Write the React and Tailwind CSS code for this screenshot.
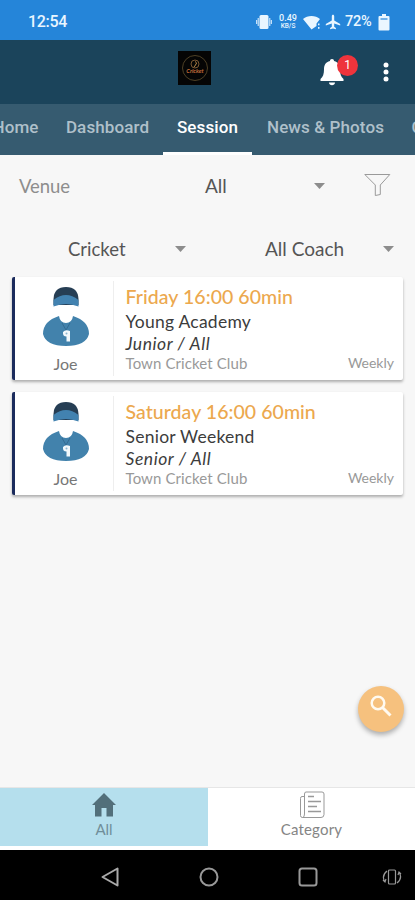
import { clsx } from "clsx";

const tabs = [
  { label: "Home", width: "w-[73px] justify-center" },
  { label: "Dashboard", width: "w-[111px] justify-center" },
  { label: "Session", width: "w-[89px] justify-center", active: true },
  { label: "News & Photos", width: "w-[147px] justify-center" },
  { label: "C", width: "w-[100px] pl-[12.5px]" },
];

const sessions = [
  {
    time: "Friday 16:00 60min",
    name: "Young Academy",
    group: "Junior / All",
    club: "Town Cricket Club",
    repeat: "Weekly",
    coach: "Joe",
  },
  {
    time: "Saturday 16:00 60min",
    name: "Senior Weekend",
    group: "Senior / All",
    club: "Town Cricket Club",
    repeat: "Weekly",
    coach: "Joe",
  },
];

function StatusBar() {
  return (
    <div className="flex h-10 shrink-0 items-center bg-[#2585d9] pt-1 pl-7 pr-[25px] font-[Roboto] font-medium text-[#eaf6ff]">
      <span className="text-[16px] tracking-[-0.3px]">12:54</span>
      <div className="ml-auto flex items-center">
        <svg width="16" height="16" viewBox="0 0 16 16" fill="currentColor">
          <rect x="3.500" y="1" width="9" height="14" rx="1.500" />
          <path d="M2.200 4v8M.7 6v4M13.800 4v8M15.300 6v4" stroke="currentColor" strokeWidth="1" />
        </svg>
        <div className="ml-[6px] flex w-5 flex-col items-center">
          <span className="text-[9px] leading-[9px]">0.49</span>
          <span className="text-[6.500px] leading-[7px]">KB/S</span>
        </div>
        <svg className="ml-[5px]" width="18" height="15" viewBox="0 0 18 15" fill="currentColor">
          <path d="M0 4C4.500 0 12.500 0 17 4L13.500 8.500V11L8.500 14.500Z" />
          <path d="M15 8.500h1.500v1.800H15zM15 12h1.500v1.800H15z" />
        </svg>
        <svg className="ml-[4px]" width="16" height="16" viewBox="0 0 16 16" fill="currentColor">
          <path d="M8 .8c.8 0 1.200.7 1.200 1.500v4.200l6 3.400v1.500l-6-1.800v3.200l1.700 1.200v1.200L8 14.400l-2.900.8V14l1.700-1.200V9.600l-6 1.800V9.900l6-3.400V2.300C6.800 1.500 7.200.8 8 .8Z" />
        </svg>
        <span className="ml-1 w-[29px] text-[14.500px] tracking-[-0.2px]">72%</span>
        <svg className="ml-[4px]" width="12" height="17" viewBox="0 0 12 17" fill="currentColor">
          <path d="M4 0h4v2h2.500q1 0 1 1v12.500q0 1-1 1h-9q-1 0-1-1V3q0-1 1-1H4z" />
          <path d="M2.500 5h7" stroke="#2585d9" strokeWidth="1.200" />
        </svg>
      </div>
    </div>
  );
}

function Header() {
  return (
    <header className="flex h-16 shrink-0 items-start bg-[#1b445b] pr-[25px]">
      <div className="mt-[11px] ml-[178px] flex h-[34px] w-[33px] items-center justify-center bg-[#050505]">
        <svg width="28" height="28" viewBox="0 0 28 28" fill="none">
          <circle cx="14" cy="14" r="12.500" stroke="#4d4025" />
          <circle cx="14" cy="10" r="4" stroke="#7a5733" />
          <path d="M14 7.500q3 1 .5 3.500l-1.500 2" stroke="#b98949" />
          <text x="14" y="19" textAnchor="middle" fontSize="5.800" fontWeight="700" fontStyle="italic" fill="#c36d3a" fontFamily="Lato, sans-serif">
            Cricket
          </text>
        </svg>
      </div>
      <div className="relative mt-[18px] ml-[109px] h-7 w-6">
        <svg width="24" height="28" viewBox="0 0 24 28" fill="#fff">
          <path d="M12 1c1.300 0 2 .8 2 2 4.500 1.200 6 4.300 6 8.500 0 4.500 1 7.500 3.500 9.500v2H.5v-2C3 19 4 16 4 11.500 4 7.300 5.500 4.200 10 3c0-1.200.7-2 2-2ZM9 24.500h6c0 3.500-6 3.500-6 0Z" />
        </svg>
        <span className="absolute -top-[3px] left-[17px] flex h-[21px] w-[21px] items-center justify-center rounded-full bg-[#ee343c] pb-[2px] font-[Roboto] text-[12px] text-white">
          1
        </span>
      </div>
      <svg className="mt-[22px] ml-auto" width="8" height="22" viewBox="0 0 8 22" fill="#fff">
        <circle cx="4" cy="3" r="2.500" />
        <circle cx="4" cy="10" r="2.500" />
        <circle cx="4" cy="17" r="2.500" />
      </svg>
    </header>
  );
}

function Tabs() {
  return (
    <nav className="h-[51px] shrink-0 overflow-hidden bg-[#365b70]">
      <div className="-ml-[21px] flex h-full w-[520px]">
        {tabs.map((tab) => (
          <div
            key={tab.label}
            className={clsx(
              "flex h-full shrink-0 border-b-[3px] pt-[11px] font-[Roboto] text-[17px] leading-6 font-medium tracking-[0.1px] whitespace-nowrap",
              tab.width,
              tab.active ? "border-white text-white" : "border-transparent text-[#afc0ca]"
            )}
          >
            {tab.label}
          </div>
        ))}
      </div>
    </nav>
  );
}

function Caret() {
  return (
    <svg className="shrink-0" width="11" height="6" viewBox="0 0 11 6" fill="#8d8d8d">
      <path d="M0 0h11L5.500 6Z" />
    </svg>
  );
}

function Filters() {
  return (
    <div className="h-[122px] shrink-0 text-[19px] leading-6 text-[#555]">
      <div className="flex h-[62px] items-center pl-[19px]">
        <span className="w-[186px] text-[18.500px] tracking-[-0.1px] text-[#8d8d8d]">Venue</span>
        <span className="w-[109px]">All</span>
        <Caret />
        <svg className="-mt-[3px] ml-[39px]" width="27" height="24" viewBox="0 0 27 24" fill="none" stroke="#9a9a9a">
          <path d="M.8 1.500h25l-9.500 10.500v9.500l-5 1V12Z" />
        </svg>
      </div>
      <div className="flex h-16 items-center pl-[68px]">
        <span className="w-[107px] text-[18.500px]">Cricket</span>
        <Caret />
        <span className="ml-[79px] w-[118px]">All Coach</span>
        <Caret />
      </div>
    </div>
  );
}

function CoachAvatar() {
  return (
    <svg width="48" height="62" viewBox="0 0 48 62">
      <path d="M11.500 19V13Q12 1 24 1T36.500 13V19Z" fill="#263e54" />
      <path d="M11.500 14Q24 4 36.500 14V20.500Q24 15.500 11.500 20.500Z" fill="#4282b0" />
      <path d="M17 30Q1 35 1 48Q4 60 24 60T47 48Q47 35 31 30Q30 37 24 37T17 30Z" fill="#4282ac" />
      <path d="M20 37l4 7 4-7" fill="none" stroke="#346b92" />
      <path d="M21 46q2.500-3 7-1v10.500h-3.500v-5q-4 0-3.500-4.500Z" fill="#f2f8fb" />
      <circle cx="24.500" cy="47.500" r="1" fill="#8db5cf" />
    </svg>
  );
}

function SessionCard({ session }) {
  return (
    <div className="flex h-[103px] rounded-[2px] border-l-[3px] border-[#1b2b5c] bg-white shadow-[0_2px_3px_rgba(0,0,0,0.3)]">
      <div className="my-1 flex w-[99px] shrink-0 flex-col items-center border-r border-[#eee] pt-[5px] pl-[3px]">
        <CoachAvatar />
        <span className="mt-[6px] text-[16px] leading-5 text-[#777]">{session.coach}</span>
      </div>
      <div className="flex min-w-0 flex-1 flex-col pt-[7px] pr-[9px] pl-[11.500px]">
        <span className="text-[19.500px] leading-[25px] font-medium tracking-[0.05px] whitespace-nowrap text-[#eca84e]">
          {session.time}
        </span>
        <span className="text-[17.500px] leading-[25px] tracking-[0.25px] text-[#3c3c3c]">{session.name}</span>
        <span className="text-[17.500px] leading-[19px] tracking-[0.55px] text-[#3c3c3c] italic">{session.group}</span>
        <div className="flex items-center justify-between leading-5 text-[#999]">
          <span className="text-[15px] tracking-[0.1px]">{session.club}</span>
          <span className="text-[14px]">{session.repeat}</span>
        </div>
      </div>
    </div>
  );
}

function BottomNav() {
  return (
    <div className="flex h-[63px] shrink-0 border-t border-[#e6e6e6] bg-white text-[15px] text-[#858585]">
      <div className="flex h-[58px] w-[208px] flex-col items-center bg-[#b5dfed]">
        <svg className="mt-[5px]" width="26" height="24" viewBox="0 0 26 24" fill="#526f7a">
          <path d="M13 0 1 12h3v11.500h6.500V15h5v8.500H22V12h3Z" />
        </svg>
        <span className="mt-[2px] leading-5 text-[#708e99]">All</span>
      </div>
      <div className="flex flex-1 flex-col items-center">
        <svg className="mt-[3px]" width="26" height="27" viewBox="0 0 26 27" fill="none" stroke="#999">
          <path d="M5.500 5.500H3q-1.500 0-1.500 2v17q0 2 2 2H22q3 0 3-3V3q0-2-2-2H7q-1.500 0-1.500 2v20q0 3.500-2 3.500" />
          <path d="M9 5.500h6M9 10.500h13M9 15.500h9M9 20.500h13" strokeWidth="1.300" />
        </svg>
        <span className="mt-[1px] leading-5 tracking-[0.2px]">Category</span>
      </div>
    </div>
  );
}

function SystemNav() {
  return (
    <div className="flex h-[50px] shrink-0 items-center bg-black pt-[3px] pl-[100px]">
      <svg className="shrink-0" width="20" height="22" viewBox="0 0 20 22" fill="none" stroke="#aaa" strokeWidth="2">
        <path d="M17.500 2.500v17L2.500 11Z" strokeLinejoin="round" />
      </svg>
      <svg className="ml-[79px] shrink-0" width="20" height="20" viewBox="0 0 20 20" fill="none" stroke="#999" strokeWidth="2">
        <circle cx="10" cy="10" r="8.500" />
      </svg>
      <svg className="ml-[79px] shrink-0" width="20" height="20" viewBox="0 0 20 20" fill="none" stroke="#999" strokeWidth="2">
        <rect x="1.500" y="1.500" width="17" height="17" rx="2.500" />
      </svg>
      <svg className="ml-[64px] shrink-0" width="20" height="18" viewBox="0 0 20 18" fill="none" stroke="#999" strokeWidth="1.200">
        <rect x="6.500" y="2" width="7" height="14" rx="1" />
        <path d="M5 3Q-1 8 3 14M1 12l2 2 1-3M15 15q6-5 2-11M19 6l-2-2-1 3" />
      </svg>
    </div>
  );
}

export default function App() {
  return (
    <div className="relative flex h-[900px] w-[415px] flex-col overflow-hidden bg-[#f7f7f7] font-[Lato,sans-serif]">
      <StatusBar />
      <Header />
      <Tabs />
      <Filters />
      <main className="flex flex-1 flex-col gap-[11.500px] px-3">
        {sessions.map((session) => (
          <SessionCard key={session.time} session={session} />
        ))}
      </main>
      <button className="absolute top-[686px] left-[358px] flex h-[46px] w-[46px] items-center justify-center rounded-full bg-[#f6c17e] shadow-[0_3px_5px_rgba(0,0,0,0.3)]">
        <svg className="-mt-[6px]" width="22" height="22" viewBox="0 0 22 22" fill="none" stroke="#fffaf0" strokeWidth="2.500">
          <circle cx="8" cy="8" r="6.300" />
          <path d="m12.500 12.500 8 8" strokeWidth="3" />
        </svg>
      </button>
      <BottomNav />
      <SystemNav />
    </div>
  );
}
